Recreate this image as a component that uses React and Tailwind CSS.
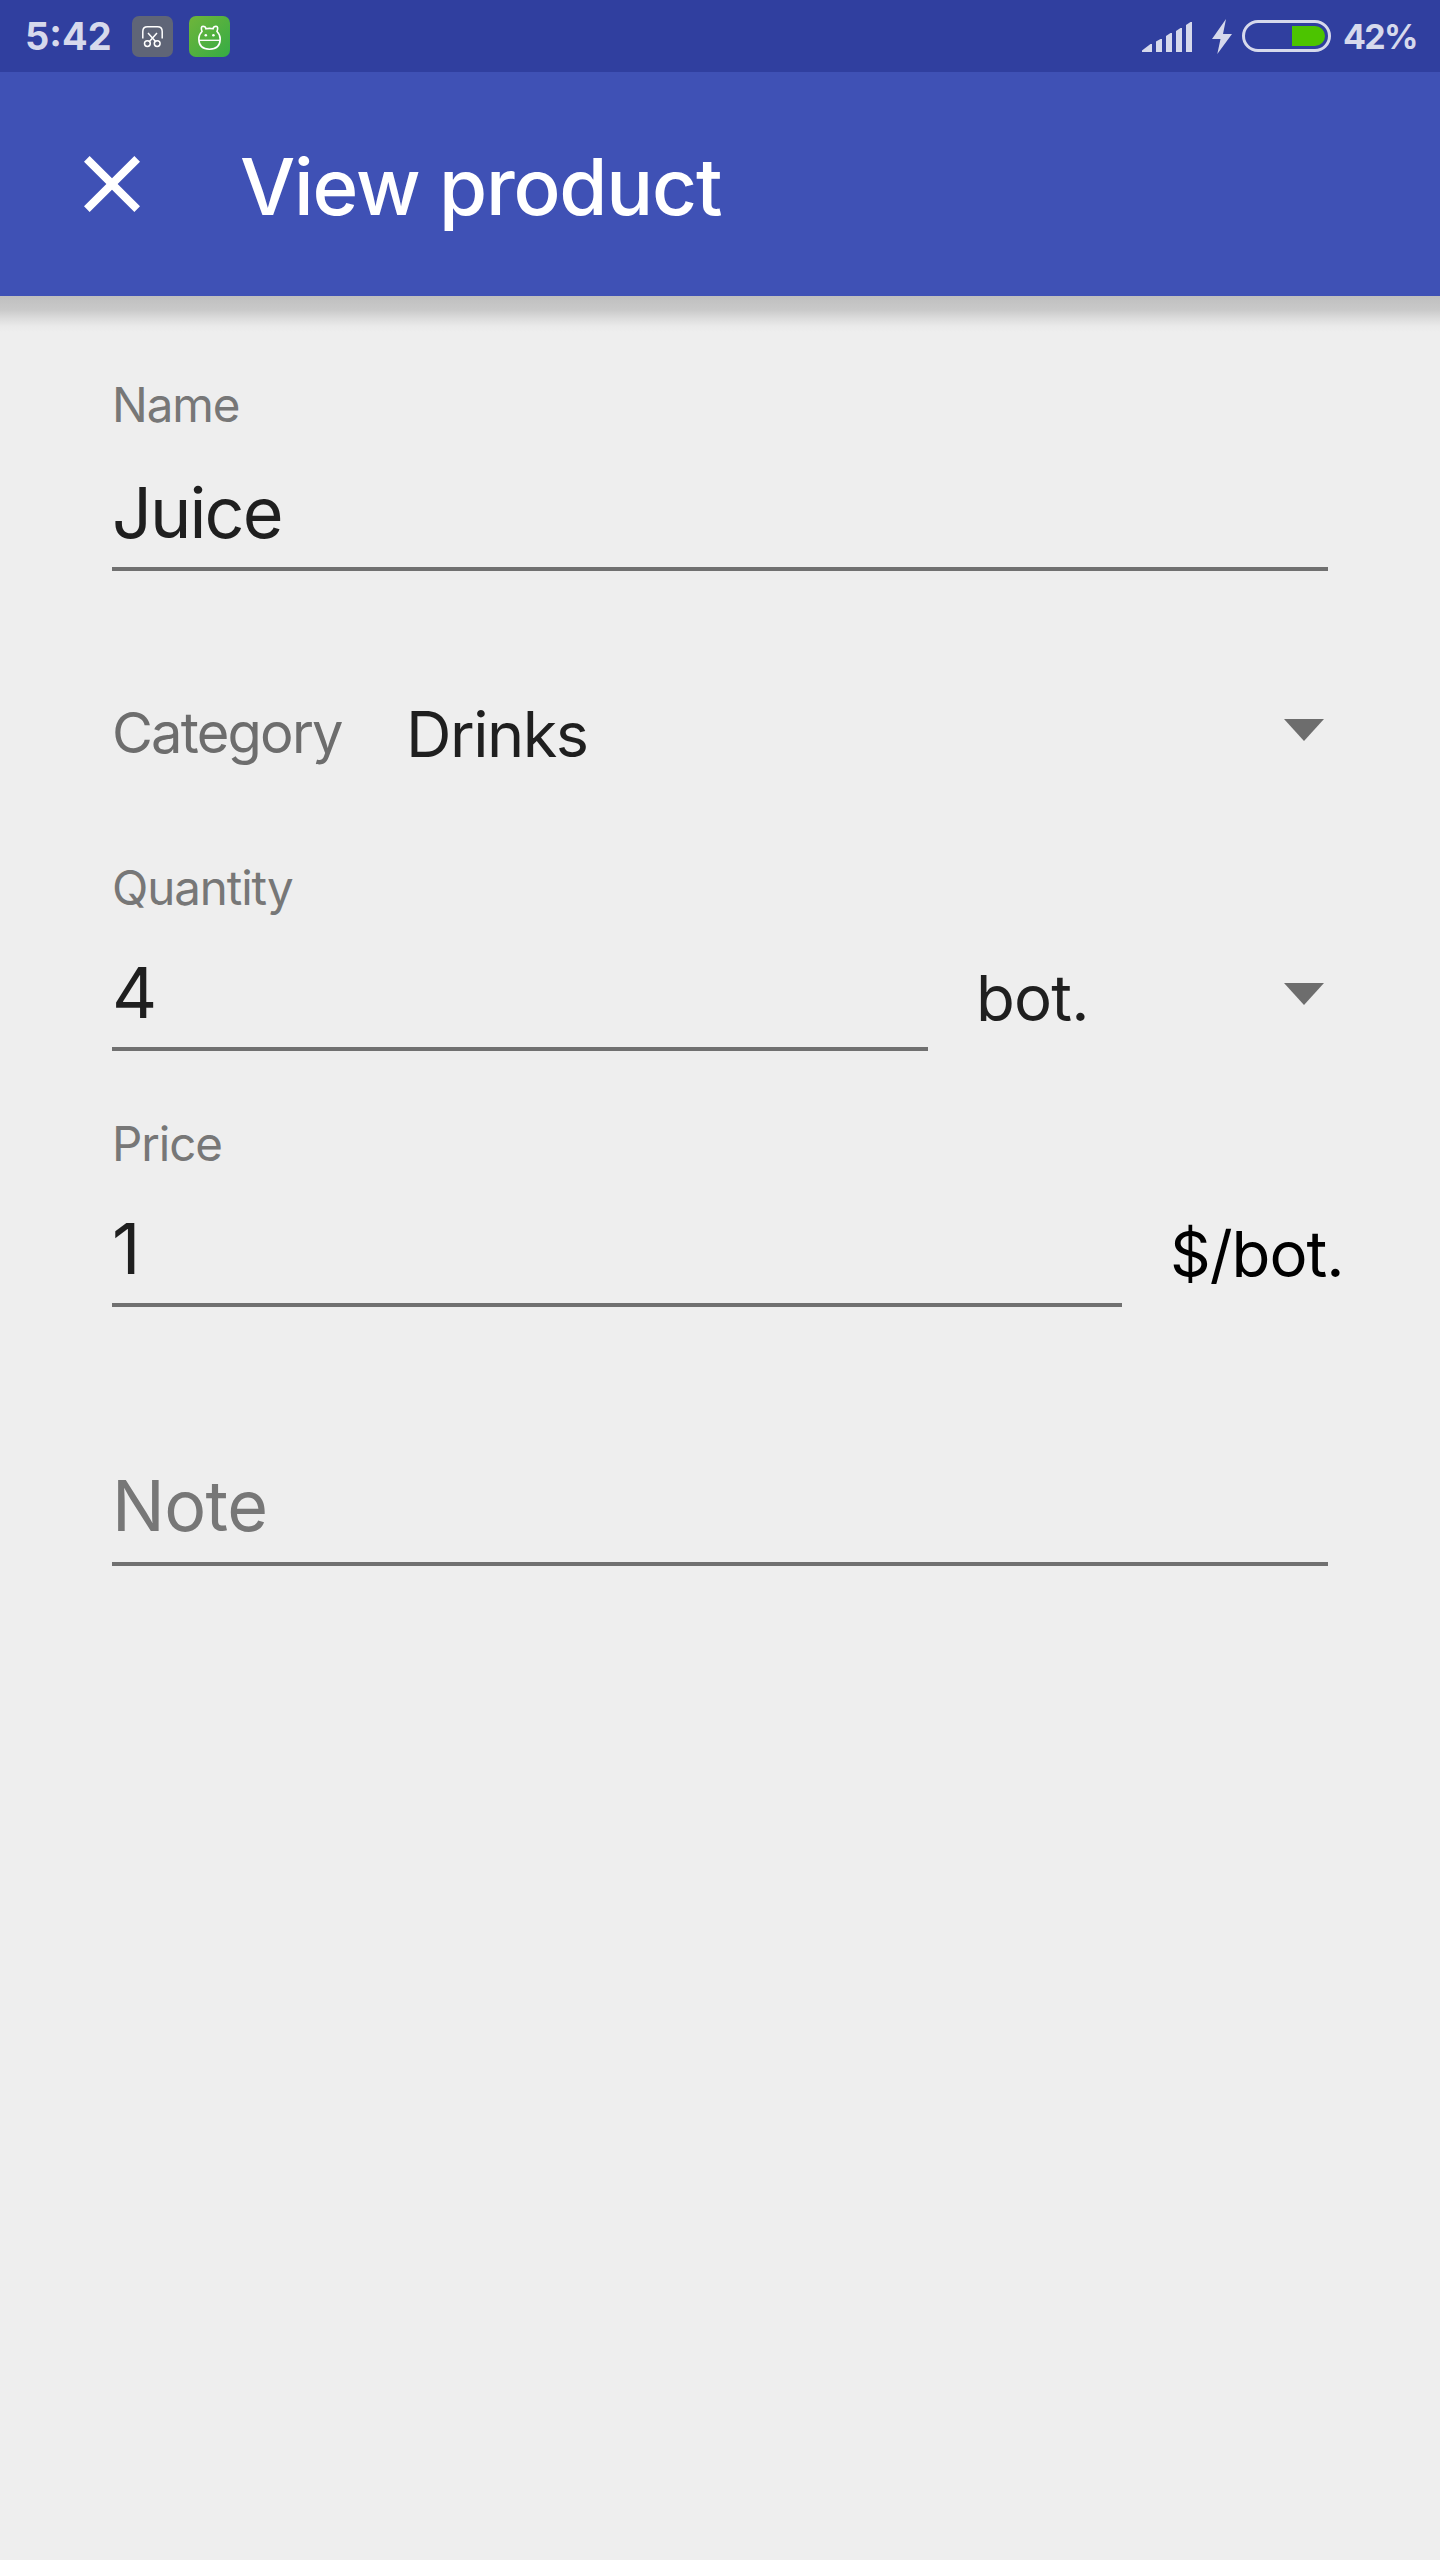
import React from "react";

const StatusBar = () => (
  <div className="flex h-[72px] items-center bg-[#303f9f] pl-[25px] pr-[24px] text-[#d6d9ec]">
    <span className="w-[107px] whitespace-nowrap text-[38px] leading-[72px] font-bold">
      5:42
    </span>
    <svg className="h-[41px] w-[41px]" viewBox="0 0 41 41" fill="none">
      <rect width="41" height="41" rx="7" fill="#5f6577" />
      <g stroke="#fff" strokeWidth="1.5">
        <path d="M10.8 22.5V15.5Q10.8 10.8 15.5 10.8H25.5Q30.2 10.8 30.2 15.5V22.5" />
        <path d="M16 17L24 26M25 17L17 26" />
        <circle cx="15.4" cy="27.6" r="2.9" />
        <circle cx="25.2" cy="27.6" r="2.9" />
      </g>
    </svg>
    <svg className="ml-4 h-[41px] w-[41px]" viewBox="0 0 41 41" fill="none">
      <defs>
        <linearGradient id="petBg" x1="0" y1="0" x2="1" y2="1">
          <stop offset="0" stopColor="#6fb53a" />
          <stop offset="1" stopColor="#35ac45" />
        </linearGradient>
      </defs>
      <rect width="41" height="41" rx="7" fill="url(#petBg)" />
      <g stroke="#fff" strokeWidth="1.6">
        <path d="M13 15.5Q11.3 10.5 14 10.3Q16.5 10.3 17 12.8Q20.5 12 24 12.8Q24.5 10.3 27 10.3Q29.7 10.5 28 15.5Q31.2 18.5 31.2 23Q31 33.2 20.5 33.2Q10 33.2 9.8 23Q9.8 18.5 13 15.5Z" />
        <path d="M10 24.3H31" strokeWidth="1.3" />
      </g>
      <circle cx="16.8" cy="19.3" r="1.3" fill="#fff" />
      <circle cx="24.4" cy="19.3" r="1.3" fill="#fff" />
    </svg>

    <div className="ml-auto flex items-center">
      <svg className="h-[72px] w-[50px]" viewBox="0 0 50 72" fill="currentColor">
        <path d="M0 52V50.5L8.5 44H10V52Z" />
        <path d="M14 52V41.5L18.5 39H20V52Z" />
        <path d="M24 52V36L28.5 33H30V52Z" />
        <path d="M34 52V31L38.5 28H40V52Z" />
        <path d="M44 52V25L48.5 22H50V52Z" />
      </svg>
      <svg className="ml-5 h-[72px] w-[20px]" viewBox="0 0 20 72" fill="currentColor">
        <path d="M14 19L0 39H8.5L5.3 54L20 34H11Z" />
      </svg>
      <div className="ml-[10px] flex h-8 w-[89px] items-center justify-end rounded-full border-[3px] border-current pr-[3px]">
        <div className="h-5 w-[33px] rounded-r-full bg-[#4cc400]" />
      </div>
      <span className="ml-[12px] w-[73px] pt-[2px] whitespace-nowrap text-[34px] leading-[70px] font-bold tracking-[-1.7px]">
        42%
      </span>
    </div>
  </div>
);

const AppBar = () => (
  <header className="relative flex h-[224px] items-start bg-[#3f51b5] text-white">
    <svg className="mt-16 ml-16 h-24 w-24" viewBox="0 0 24 24" fill="currentColor">
      <path d="M19 6.41L17.59 5 12 10.59 6.41 5 5 6.41 10.59 12 5 17.59 6.41 19 12 13.41 17.59 19 19 17.59 13.41 12z" />
    </svg>
    <h1 className="mt-[65px] ml-[80px] whitespace-nowrap text-[78px] leading-[100px] font-medium tracking-[-1.2px]">
      View product
    </h1>
    {/* drop shadow over the form */}
    <div className="absolute inset-x-0 top-full h-9 bg-[linear-gradient(#bfbfbf_0%,#c9c9c9_38%,#dcdcdc_62%,#eaeaea_84%,#eeeeee_100%)]" />
  </header>
);

const Arrow = ({ className }) => (
  <svg className={className} viewBox="0 0 40 22" fill="#6d6d6d">
    <path d="M0 0H40L20 22Z" />
  </svg>
);

const Label = ({ children }) => (
  <div className="text-[47.5px] leading-[60px] tracking-[-1.1px] text-[#777777]">{children}</div>
);

const Value = ({ className, children }) => (
  <div className={`text-[70px] leading-[100px] tracking-[-1.9px] text-[#1f1f1f] ${className}`}>
    {children}
  </div>
);

const Underline = ({ className }) => <div className={`h-1 bg-[#707070] ${className}`} />;

const App = () => {
  return (
    <div className="h-[2560px] w-[1440px] overflow-hidden bg-[#eeeeee] font-['Inter',sans-serif]">
      <StatusBar />
      <AppBar />
      <main className="pt-[79px] pr-[112px] pl-[112px]">
        <Label>Name</Label>
        <Value className="mt-7">Juice</Value>
        <Underline className="mt-1" />

        <div className="mt-[122px] flex h-20 items-center leading-[80px]">
          <span className="w-[294px] text-[56px] tracking-[-1.8px] text-[#6d6d6d]">Category</span>
          <span className="pt-[2px] text-[63px] tracking-[-1.5px] text-[#1f1f1f]">Drinks</span>
          <Arrow className="mt-[-6px] mr-1 ml-auto h-[22px] w-10" />
        </div>

        <div className="mt-[85px] flex items-end">
          <div className="w-[816px]">
            <Label>Quantity</Label>
            <Value className="mt-[25px]">4</Value>
            <Underline className="mt-1" />
          </div>
          <span className="mb-[3px] ml-12 text-[63.5px] leading-[100px] tracking-[-0.8px] text-[#1f1f1f]">
            bot.
          </span>
          <Arrow className="mr-1 mb-[46px] ml-auto h-[22px] w-10" />
        </div>

        <div className="mt-[63px] flex items-end">
          <div className="w-[1010px] shrink-0">
            <Label>Price</Label>
            <Value className="mt-[25px]">1</Value>
            <Underline className="mt-1" />
          </div>
          <span className="mb-[3px] ml-12 text-[63.5px] leading-[100px] tracking-[-1px] whitespace-nowrap text-black">
            $/bot.
          </span>
        </div>

        <div className="mt-[149px] text-[70px] leading-[100px] tracking-[-0.6px] text-[#777777]">
          Note
        </div>
        <Underline className="mt-[6px]" />
      </main>
    </div>
  );
};

export default App;
